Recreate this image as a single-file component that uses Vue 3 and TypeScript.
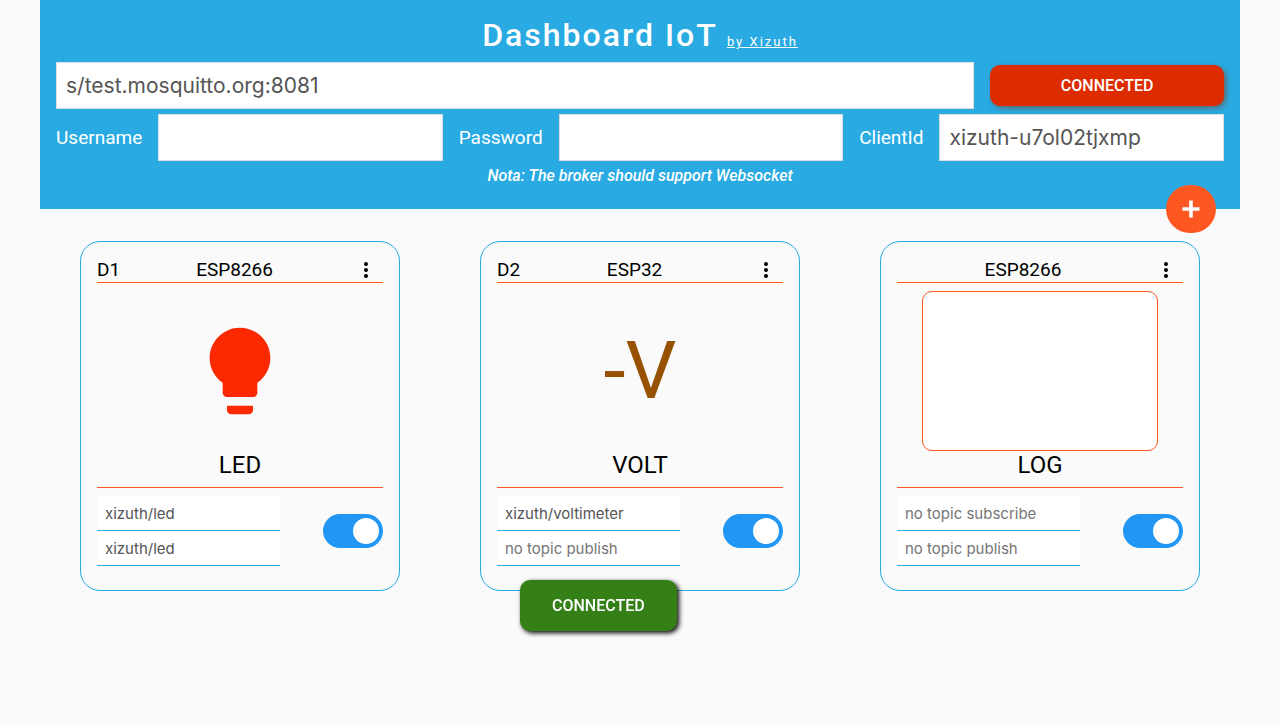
<script setup lang="ts">
import { ref } from 'vue'

interface Widget {
  id: number
  pin: string
  device: string
  kind: 'led' | 'value' | 'log'
  name: string
  subscribe: string
  publish: string
  active: boolean
}

const broker = ref('s/test.mosquitto.org:8081')
const username = ref('')
const password = ref('')
const clientId = ref('xizuth-u7ol02tjxmp')
const log = ref('')

const widgets = ref<Widget[]>([
  { id: 1, pin: 'D1', device: 'ESP8266', kind: 'led', name: 'LED', subscribe: 'xizuth/led', publish: 'xizuth/led', active: true },
  { id: 2, pin: 'D2', device: 'ESP32', kind: 'value', name: 'VOLT', subscribe: 'xizuth/voltimeter', publish: '', active: true },
  { id: 3, pin: '', device: 'ESP8266', kind: 'log', name: 'LOG', subscribe: '', publish: '', active: true },
])
</script>

<template>
  <div class="app">
    <header class="header">
      <h1 class="title">Dashboard IoT <a class="author" href="#">by Xizuth</a></h1>
      <form class="form" @submit.prevent>
        <div class="row">
          <input v-model="broker" class="field" type="text" aria-label="Broker" />
          <button class="connect" type="submit">CONNECTED</button>
        </div>
        <div class="row">
          <label for="username">Username</label>
          <input id="username" v-model="username" class="field" type="text" />
          <label for="password">Password</label>
          <input id="password" v-model="password" class="field" type="password" />
          <label for="client">ClientId</label>
          <input id="client" v-model="clientId" class="field" type="text" />
        </div>
      </form>
      <p class="note">Nota: The broker should support Websocket</p>
      <button class="add" type="button" aria-label="Add widget">
        <svg viewBox="0 0 18 18" width="18" height="18"><path d="M9 .5v17M.5 9h17" stroke="#fff" stroke-width="3.6" /></svg>
      </button>
    </header>

    <main class="cards">
      <article v-for="w in widgets" :key="w.id" class="card">
        <div class="card-head">
          <span>{{ w.pin }}</span>
          <span>{{ w.device }}</span>
          <button class="menu" type="button" aria-label="Menu">
            <svg viewBox="0 0 24 24" width="24" height="24">
              <circle cx="12" cy="6" r="2" /><circle cx="12" cy="12" r="2" /><circle cx="12" cy="18" r="2" />
            </svg>
          </button>
        </div>
        <div class="card-body">
          <svg v-if="w.kind === 'led'" class="bulb" viewBox="0 0 24 24" width="104" height="104">
            <path d="M9 21c0 .55.45 1 1 1h4c.55 0 1-.45 1-1v-1H9v1zm3-19C8.14 2 5 5.14 5 9c0 2.38 1.19 4.47 3 5.74V17c0 .55.45 1 1 1h6c.55 0 1-.45 1-1v-2.26c1.81-1.27 3-3.36 3-5.74 0-3.86-3.14-7-7-7z" />
          </svg>
          <span v-else-if="w.kind === 'value'" class="value">-V</span>
          <textarea v-else v-model="log" class="log" aria-label="Log" readonly></textarea>
        </div>
        <h2 class="name">{{ w.name }}</h2>
        <div class="card-foot">
          <div class="topics">
            <input v-model="w.subscribe" type="text" placeholder="no topic subscribe" aria-label="Subscribe topic" />
            <input v-model="w.publish" type="text" placeholder="no topic publish" aria-label="Publish topic" />
          </div>
          <input v-model="w.active" class="switch" type="checkbox" :aria-label="w.name + ' active'" />
        </div>
      </article>
    </main>

    <div class="toast" role="status">CONNECTED</div>
  </div>
</template>

<style>
body {
  margin: 0;
  background: #fafafa;
}
</style>

<style scoped>
* {
  box-sizing: border-box;
}
.app {
  max-width: 1200px;
  margin: 0 auto;
  font-family: Roboto, sans-serif;
  color: #000;
}
button,
input {
  margin: 0;
  border: 0;
}
input {
  font-family: Inter, sans-serif;
  color: #555;
  border-radius: 0;
  min-width: 0;
}
.header {
  position: relative;
  padding: 8px 16px 24px;
  background: #29aae2;
  color: #fff;
}
.title {
  margin: 0;
  font-size: 32px;
  line-height: 54px;
  font-weight: 500;
  letter-spacing: 2px;
  text-align: center;
}
.author {
  color: #fff;
  font-size: 13px;
  line-height: 16px;
  font-weight: 400;
}
.form {
  display: grid;
  grid-template-columns: minmax(0, 1fr);
  gap: 5px;
}
.row {
  display: flex;
  align-items: center;
  gap: 16px;
  font-size: 19px;
}
.field {
  flex: 1;
  height: 47px;
  padding: 0 9px;
  border: 1px solid #ddd;
  background: #fff;
  font-size: 21px;
}
.connect {
  flex: 0 0 20%;
  height: 41px;
  border-radius: 10px;
  background: #dd2c00;
  color: #fff;
  font: 500 16px Roboto, sans-serif;
  box-shadow: 2px 2px 5px #666;
}
.note {
  margin: 5px 0 0;
  font-size: 16px;
  line-height: 19px;
  font-weight: 500;
  font-style: italic;
  text-align: center;
}
.add {
  position: absolute;
  right: 24px;
  bottom: -24px;
  display: grid;
  place-items: center;
  width: 50px;
  height: 48px;
  padding: 0;
  border-radius: 50px;
  background: #ff5722;
}
.cards {
  display: grid;
  grid-template-columns: repeat(3, 1fr);
  gap: 80px;
  padding: 32px 40px;
}
.card {
  padding: 16px 16px 24px;
  border: 1px solid #29aae2;
  border-radius: 20px;
}
.card-head {
  display: flex;
  justify-content: space-between;
  height: 25px;
  border-bottom: 1px solid #ff5722;
  font-size: 19px;
  line-height: 24px;
}
.menu {
  display: grid;
  place-items: center;
  width: 34px;
  height: 24px;
  padding: 0;
  background: none;
}
.card-body {
  display: flex;
  justify-content: center;
  align-items: center;
  height: 160px;
  margin-top: 8px;
}
.bulb {
  fill: #fb2800;
}
.value {
  color: #965200;
  font-size: 80px;
  line-height: 94px;
}
.log {
  width: 236px;
  height: 160px;
  border: 1px solid #ff5722;
  border-radius: 10px;
  background: #fff;
  resize: none;
}
.name {
  margin: 0;
  padding-bottom: 8px;
  border-bottom: 1px solid #ff5722;
  font-size: 24px;
  line-height: 28px;
  font-weight: 400;
  text-align: center;
}
.card-foot {
  display: flex;
  justify-content: space-between;
  align-items: center;
  margin-top: 8px;
}
.topics {
  display: grid;
  width: 64%;
}
.topics input {
  height: 35px;
  padding: 0 8px;
  border-bottom: 1px solid #29aae2;
  background: #fff;
  font-size: 15px;
}
.topics input::placeholder {
  color: #757575;
}
.switch {
  appearance: none;
  display: flex;
  width: 60px;
  height: 34px;
  padding: 4px;
  border-radius: 34px;
  background: #ccc;
}
.switch::before {
  content: '';
  width: 26px;
  height: 26px;
  border-radius: 50%;
  background: #fff;
}
.switch:checked {
  justify-content: flex-end;
  background: #2196f3;
}
.toast {
  position: fixed;
  left: calc(50% - 120px);
  bottom: 94px;
  padding: 16px 32px;
  border-radius: 10px;
  background: #348017;
  color: #fff;
  font-size: 16px;
  line-height: 19px;
  font-weight: 500;
  box-shadow: 2px 2px 5px #000;
}
</style>
